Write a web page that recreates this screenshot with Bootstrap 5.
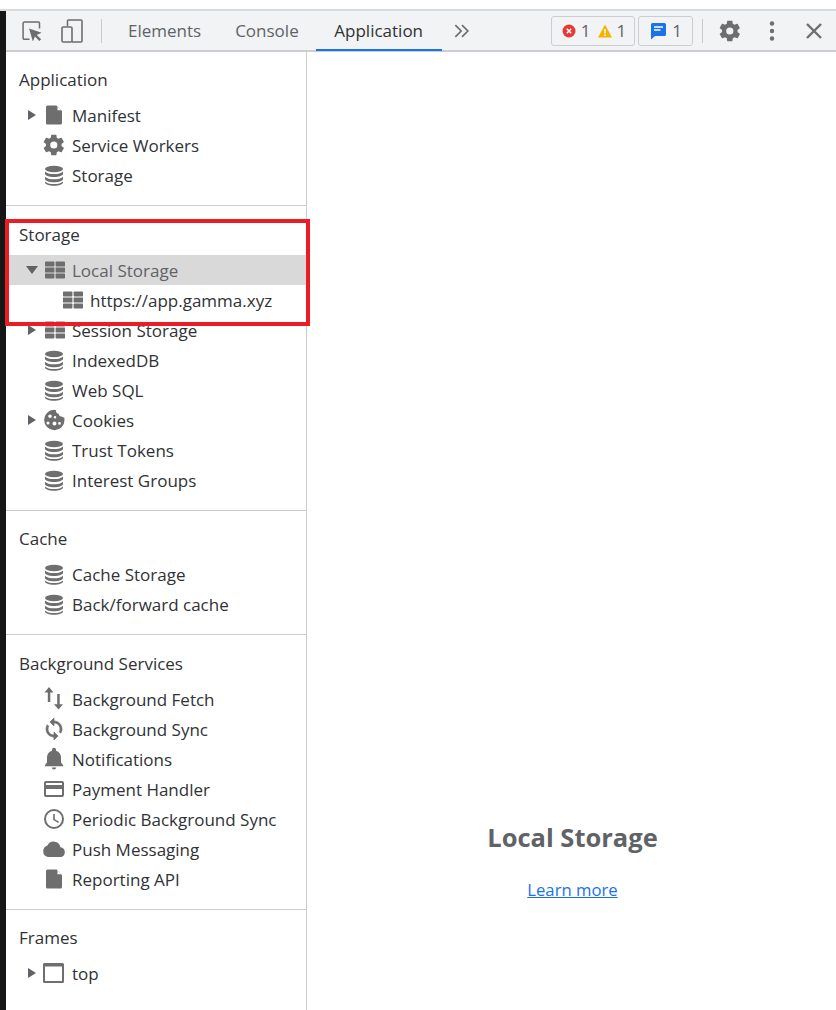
<!DOCTYPE html>
<html lang="en">
<head>
<meta charset="utf-8">
<title>DevTools Application panel</title>
<link href="https://cdn.jsdelivr.net/npm/bootstrap@5.3.0/dist/css/bootstrap.min.css" rel="stylesheet">
<style>
html,body{height:100%;}
body{background:#fff;font-family:"Open Sans","Noto Sans",sans-serif;font-size:17px;color:#303236;overflow:hidden;position:relative;}
.top-gap{height:11px;background:#fff;border-bottom:2px solid #dadbdd;}
.frame-wrap{height:999px;}
.tool-strip{height:41px;background:#f1f3f4;border-bottom:2px solid #cbcdd1;}
.edge-bar{width:6px;background:#161616;flex:none;}
.tool-ico{width:24px;height:24px;color:#6e6e6e;flex:none;}
.ico-select{width:20px;height:20px;margin-left:16px;}
.ico-device{width:22px;height:24px;margin-left:19px;}
.ico-chev{width:20px;height:20px;margin-left:10px;}
.ico-dots{margin-left:18px;}
.ico-close{margin-left:18px;margin-right:10px;}
.vsep{width:1px;height:24px;background:#c8cacd;flex:none;}
.vsep-a{margin-left:18px;margin-right:9px;}
.vsep-b{margin-left:9px;margin-right:15px;}
.tab-item{height:41px;line-height:41px;padding:0 17px;color:#5f6368;flex:none;}
.tab-on{color:#303236;border-bottom:2px solid #1a73e8;padding:0;width:126px;text-align:center;}
.count-pill{height:30px;border:1px solid #cbcdd1;border-radius:3px;color:#5f6368;padding:0 8px 0 10px;gap:5px;flex:none;}
.warn-gap{margin-left:2px;}
.pill-msg{margin-left:3px;padding:0 10px 0 11px;}
.shell{height:958px;}
.side-col{width:301px;border-right:1px solid #cbcdd1;flex:none;}
.side-sect{border-bottom:1px solid #cbcdd1;padding-top:14px;padding-bottom:14px;}
.side-sect:last-child{border-bottom:0;}
.sect-a{padding-top:13px;padding-bottom:15px;}
.sect-b{padding-bottom:15px;}
.sect-head{height:30px;line-height:30px;padding-left:13px;margin-bottom:5px;color:#303236;}
.sect-tight{padding-top:13px;padding-bottom:15px;}
.sect-d{padding-top:14px;padding-bottom:15px;}
.tree-row{height:30px;padding-left:20px;padding-top:2px;white-space:nowrap;}
.tree-sel{background:#d9d9d9;color:#5f6368;}
.tree-sub{padding-left:38px;}
.arrow-slot{width:15px;height:30px;flex:none;margin-top:-2px;}
.row-ico{width:24px;height:24px;color:#6e6e6e;flex:none;margin:-2px 6px 0 1px;}
.empty-pane{padding-top:767px;padding-left:2px;color:#5f6368;}
.pane-title{font-size:25.5px;font-weight:700;line-height:36px;margin:0 0 22px;color:#5f6368;}
.pane-link{color:#1a73e8;font-size:16.700px;}
.red-frame{position:absolute;left:5px;top:219px;width:305px;height:107px;border:4px solid #ed1c24;pointer-events:none;}
</style>
</head>
<body>
<svg width="0" height="0" class="position-absolute">
<defs>
<symbol id="i-doc" viewBox="0 0 24 24"><path fill="currentColor" d="M5.500 2.500h9l5.500 5.500V20a1.500 1.500 0 0 1-1.500 1.500h-13A1.500 1.500 0 0 1 4 20V4A1.500 1.500 0 0 1 5.500 2.500z"/><path fill="#fff" d="M15.500 3.500v3.800h3.800z"/></symbol>
<symbol id="i-gear" viewBox="0 0 24 24"><path fill="currentColor" fill-rule="evenodd" d="M19.500 13c.1-.3.100-.7.100-1s0-.7-.1-1l2.200-1.700c.2-.2.250-.4.100-.65l-2.100-3.600c-.15-.2-.4-.3-.6-.2l-2.600 1c-.55-.4-1.100-.75-1.750-1L14.400 2.100c0-.25-.25-.4-.5-.4H9.700c-.25 0-.45.150-.5.400L8.800 4.850c-.65.250-1.200.6-1.750 1l-2.600-1c-.25-.1-.5 0-.6.2l-2.100 3.600c-.15.250-.1.450.1.650L4.050 11c0 .3-.050.7-.050 1s0 .7.050 1l-2.200 1.700c-.2.200-.25.400-.1.650l2.100 3.600c.1.200.35.300.6.200l2.600-1c.55.400 1.100.750 1.750 1l.4 2.750c.05.250.25.400.5.400h4.200c.25 0 .5-.15.500-.4l.4-2.750c.65-.25 1.200-.6 1.750-1l2.600 1c.2.100.45 0 .6-.2l2.100-3.600c.15-.25.100-.45-.1-.65zM11.800 15.600a3.600 3.600 0 1 1 0-7.200 3.600 3.600 0 0 1 0 7.200z"/></symbol>
<symbol id="i-db" viewBox="0 0 24 24"><g fill="currentColor" transform="translate(0 .5)"><ellipse cx="12" cy="5.500" rx="9" ry="3.200"/><path d="M3 8v2.300c0 1.800 4 3.200 9 3.200s9-1.400 9-3.200V8c-1.300 1.700-5 2.600-9 2.600S4.300 9.700 3 8z"/><path d="M3 13.200v2.300c0 1.800 4 3.200 9 3.200s9-1.400 9-3.200v-2.300c-1.300 1.700-5 2.600-9 2.600s-7.700-.9-9-2.600z"/><path d="M3 17.900v1.200c0 1.800 4 3.200 9 3.200s9-1.400 9-3.200v-1.200c-1.300 1.700-5 2.600-9 2.600s-7.700-.9-9-2.600z"/></g></symbol>
<symbol id="i-table" viewBox="0 0 24 24"><g fill="currentColor"><rect x="3" y="3.500" width="9.400" height="5" rx=".7"/><rect x="13.600" y="3.500" width="9.400" height="5" rx=".7"/><rect x="3" y="9.500" width="9.400" height="5"/><rect x="13.600" y="9.500" width="9.400" height="5"/><rect x="3" y="15.500" width="9.400" height="5" rx=".7"/><rect x="13.600" y="15.500" width="9.400" height="5" rx=".7"/></g></symbol>
<symbol id="i-cookie" viewBox="0 0 24 24"><path fill="currentColor" fill-rule="evenodd" d="M12 1.800c1 0 1.600.2 2 .4-.3 1.900 1 3.400 2.700 3.500.1 1.700 1.500 3 3.100 2.900.5.800 2.400 1 2.400 1 .2.800.300 1.500.300 2.400A10.200 10.200 0 1 1 12 1.800zM8 6.500a1.800 1.800 0 1 0 0 3.600 1.800 1.800 0 0 0 0-3.600zm5 1.500a1.300 1.300 0 1 0 0 2.600 1.300 1.300 0 0 0 0-2.600zm-7 5.500a1.500 1.500 0 1 0 0 3 1.500 1.500 0 0 0 0-3zm6.500 0a2 2 0 1 0 0 4 2 2 0 0 0 0-4zm5 .5a1.400 1.400 0 1 0 0 2.800 1.400 1.400 0 0 0 0-2.800z"/></symbol>
<symbol id="i-updown" viewBox="0 0 24 24"><path fill="currentColor" d="M7 0 11.500 5.500H8.300V15H5.800V5.500H2.500zM15.200 7h2.500v10.200h3.300L16.500 22.500 12 17.200h3.200z"/></symbol>
<symbol id="i-sync" viewBox="0 0 24 24"><path fill="currentColor" stroke="currentColor" stroke-width=".7" d="M12 4V1L8 5l4 4V6c3.310 0 6 2.690 6 6 0 1.010-.25 1.970-.7 2.800l1.460 1.460C19.540 15.030 20 13.570 20 12c0-4.420-3.580-8-8-8zm0 14c-3.310 0-6-2.690-6-6 0-1.010.25-1.970.7-2.800L5.240 7.740C4.460 8.970 4 10.430 4 12c0 4.420 3.580 8 8 8v3l4-4-4-4v3z"/></symbol>
<symbol id="i-bell" viewBox="0 0 24 24"><path fill="currentColor" d="M12 22.500a2.200 2.200 0 0 0 2.200-2h-4.400a2.200 2.200 0 0 0 2.200 2zM19 15.500v-5c0-3.300-1.800-6-5-6.800V2.800a2 2 0 0 0-4 0v.9c-3.200.8-5 3.500-5 6.800v5l-2 2.500v1.200h18v-1.200z"/></symbol>
<symbol id="i-card" viewBox="0 0 24 24"><path fill="currentColor" d="M20 4H4a2 2 0 0 0-2 2v12a2 2 0 0 0 2 2h16a2 2 0 0 0 2-2V6a2 2 0 0 0-2-2zm0 14H4v-6h16zm0-10H4V6h16z"/></symbol>
<symbol id="i-clock" viewBox="0 0 24 24"><path fill="currentColor" d="M12 2a10 10 0 1 0 0 20 10 10 0 0 0 0-20zm0 18a8 8 0 1 1 0-16 8 8 0 0 1 0 16z"/><path fill="currentColor" d="M12.800 7H11.200v6l5 3 .8-1.300-4.200-2.500z"/></symbol>
<symbol id="i-cloud" viewBox="0 0 24 24"><path fill="currentColor" d="M18.500 10.200A7 7 0 0 0 5.400 8.400 6 6 0 0 0 6 20h13a5 5 0 0 0-.5-9.800z"/></symbol>
<symbol id="i-frame" viewBox="0 0 24 24"><path fill="currentColor" d="M20.500 2h-18A1.500 1.500 0 0 0 1 3.500v17A1.500 1.500 0 0 0 2.500 22h18a1.500 1.500 0 0 0 1.500-1.500v-17A1.500 1.500 0 0 0 20.500 2zM20 20H3V5.500h17z"/></symbol>
</defs>
</svg>

<div class="top-gap"></div>
<div class="frame-wrap d-flex">
<div class="edge-bar"></div>
<div class="flex-grow-1">
<div class="tool-strip d-flex align-items-center">
  <svg class="tool-ico ico-select" viewBox="0 0 24 24"><path fill="none" stroke="currentColor" stroke-width="1.800" d="M9 22H2.800A1.500 1.500 0 0 1 1.300 20.500V2.800A1.500 1.500 0 0 1 2.800 1.300h16.700a1.500 1.500 0 0 1 1.500 1.500V9"/><path fill="currentColor" d="M8.500 9l15 5-5.800 2.700 5.300 5.300-2.200 2-5.300-5.300-2.500 6z"/></svg>
  <svg class="tool-ico ico-device" viewBox="0 0 22 24"><path fill="none" stroke="currentColor" stroke-width="1.600" d="M6.500 7V2A1 1 0 0 1 7.500 1H20a1 1 0 0 1 1 1v20a1 1 0 0 1-1 1H11"/><rect x="1" y="8" width="10" height="15" rx="1.200" fill="none" stroke="currentColor" stroke-width="1.600"/></svg>
  <span class="vsep vsep-a"></span>
  <div class="tab-item">Elements</div>
  <div class="tab-item">Console</div>
  <div class="tab-item tab-on">Application</div>
  <svg class="tool-ico ico-chev" viewBox="0 0 24 24"><path fill="none" stroke="currentColor" stroke-width="2" d="M4 5l7 7-7 7M12 5l7 7-7 7"/></svg>
  <div class="count-pill d-flex align-items-center ms-auto">
    <svg width="14" height="14" viewBox="0 0 14 14"><circle cx="7" cy="7" r="6.500" fill="#e53935"/><path d="M4.800 4.800l4.400 4.400M9.200 4.800l-4.400 4.400" stroke="#fff" stroke-width="1.500"/></svg>
    <span>1</span>
    <svg class="warn-gap" width="14" height="14" viewBox="0 0 14 14"><path d="M7 .5 14 13.500H0z" fill="#f4b400"/><path d="M7 5v4.500M7 10.500v1.500" stroke="#fff" stroke-width="1.400"/></svg>
    <span>1</span>
  </div>
  <div class="count-pill pill-msg d-flex align-items-center">
    <svg width="17" height="18" viewBox="0 0 17 18"><path d="M2.500 1h12A1.500 1.500 0 0 1 16 2.500v10a1.500 1.500 0 0 1-1.500 1.500H5L1 17.500V2.500A1.500 1.500 0 0 1 2.500 1z" fill="#1a73e8"/><path d="M4 5h9M4 8h6.500" stroke="#fff" stroke-width="1.500"/></svg>
    <span>1</span>
  </div>
  <span class="vsep vsep-b"></span>
  <svg class="tool-ico" viewBox="0 0 24 24"><use href="#i-gear"/></svg>
  <svg class="tool-ico ico-dots" viewBox="0 0 24 24"><circle cx="12" cy="4.500" r="2.200" fill="currentColor"/><circle cx="12" cy="12" r="2.200" fill="currentColor"/><circle cx="12" cy="19.500" r="2.200" fill="currentColor"/></svg>
  <svg class="tool-ico ico-close" viewBox="0 0 24 24"><path d="M5 5l14 14M19 5 5 19" stroke="currentColor" stroke-width="2.400" fill="none"/></svg>
</div>

<div class="shell d-flex">
  <div class="side-col">
    <div class="side-sect sect-a">
      <div class="sect-head">Application</div>
      <div class="tree-row d-flex align-items-center"><svg class="arrow-slot" viewBox="0 0 15 30"><path d="M2 10v10l8-5z" fill="#5f6368"/></svg><svg class="row-ico"><use href="#i-doc"/></svg>Manifest</div>
      <div class="tree-row d-flex align-items-center"><span class="arrow-slot"></span><svg class="row-ico"><use href="#i-gear"/></svg>Service Workers</div>
      <div class="tree-row d-flex align-items-center"><span class="arrow-slot"></span><svg class="row-ico"><use href="#i-db"/></svg>Storage</div>
    </div>
    <div class="side-sect sect-b">
      <div class="sect-head">Storage</div>
      <div class="tree-row tree-sel d-flex align-items-center"><svg class="arrow-slot" viewBox="0 0 15 30"><path d="M0 11h12l-6 8z" fill="#5f6368"/></svg><svg class="row-ico"><use href="#i-table"/></svg>Local Storage</div>
      <div class="tree-row tree-sub d-flex align-items-center"><span class="arrow-slot"></span><svg class="row-ico"><use href="#i-table"/></svg>https://app.gamma.xyz</div>
      <div class="tree-row d-flex align-items-center"><svg class="arrow-slot" viewBox="0 0 15 30"><path d="M2 10v10l8-5z" fill="#5f6368"/></svg><svg class="row-ico"><use href="#i-table"/></svg>Session Storage</div>
      <div class="tree-row d-flex align-items-center"><span class="arrow-slot"></span><svg class="row-ico"><use href="#i-db"/></svg>IndexedDB</div>
      <div class="tree-row d-flex align-items-center"><span class="arrow-slot"></span><svg class="row-ico"><use href="#i-db"/></svg>Web SQL</div>
      <div class="tree-row d-flex align-items-center"><svg class="arrow-slot" viewBox="0 0 15 30"><path d="M2 10v10l8-5z" fill="#5f6368"/></svg><svg class="row-ico"><use href="#i-cookie"/></svg>Cookies</div>
      <div class="tree-row d-flex align-items-center"><span class="arrow-slot"></span><svg class="row-ico"><use href="#i-db"/></svg>Trust Tokens</div>
      <div class="tree-row d-flex align-items-center"><span class="arrow-slot"></span><svg class="row-ico"><use href="#i-db"/></svg>Interest Groups</div>
    </div>
    <div class="side-sect sect-tight">
      <div class="sect-head">Cache</div>
      <div class="tree-row d-flex align-items-center"><span class="arrow-slot"></span><svg class="row-ico"><use href="#i-db"/></svg>Cache Storage</div>
      <div class="tree-row d-flex align-items-center"><span class="arrow-slot"></span><svg class="row-ico"><use href="#i-db"/></svg>Back/forward cache</div>
    </div>
    <div class="side-sect sect-d">
      <div class="sect-head">Background Services</div>
      <div class="tree-row d-flex align-items-center"><span class="arrow-slot"></span><svg class="row-ico"><use href="#i-updown"/></svg>Background Fetch</div>
      <div class="tree-row d-flex align-items-center"><span class="arrow-slot"></span><svg class="row-ico"><use href="#i-sync"/></svg>Background Sync</div>
      <div class="tree-row d-flex align-items-center"><span class="arrow-slot"></span><svg class="row-ico"><use href="#i-bell"/></svg>Notifications</div>
      <div class="tree-row d-flex align-items-center"><span class="arrow-slot"></span><svg class="row-ico"><use href="#i-card"/></svg>Payment Handler</div>
      <div class="tree-row d-flex align-items-center"><span class="arrow-slot"></span><svg class="row-ico"><use href="#i-clock"/></svg>Periodic Background Sync</div>
      <div class="tree-row d-flex align-items-center"><span class="arrow-slot"></span><svg class="row-ico"><use href="#i-cloud"/></svg>Push Messaging</div>
      <div class="tree-row d-flex align-items-center"><span class="arrow-slot"></span><svg class="row-ico"><use href="#i-doc"/></svg>Reporting API</div>
    </div>
    <div class="side-sect sect-tight">
      <div class="sect-head">Frames</div>
      <div class="tree-row d-flex align-items-center"><svg class="arrow-slot" viewBox="0 0 15 30"><path d="M2 10v10l8-5z" fill="#5f6368"/></svg><svg class="row-ico"><use href="#i-frame"/></svg>top</div>
    </div>
  </div>
  <div class="empty-pane flex-grow-1 text-center">
    <h1 class="pane-title">Local Storage</h1>
    <a class="pane-link" href="#">Learn more</a>
  </div>
</div>
</div>
</div>
<div class="red-frame"></div>
<script src="https://cdn.jsdelivr.net/npm/bootstrap@5.3.0/dist/js/bootstrap.bundle.min.js"></script>
</body>
</html>
